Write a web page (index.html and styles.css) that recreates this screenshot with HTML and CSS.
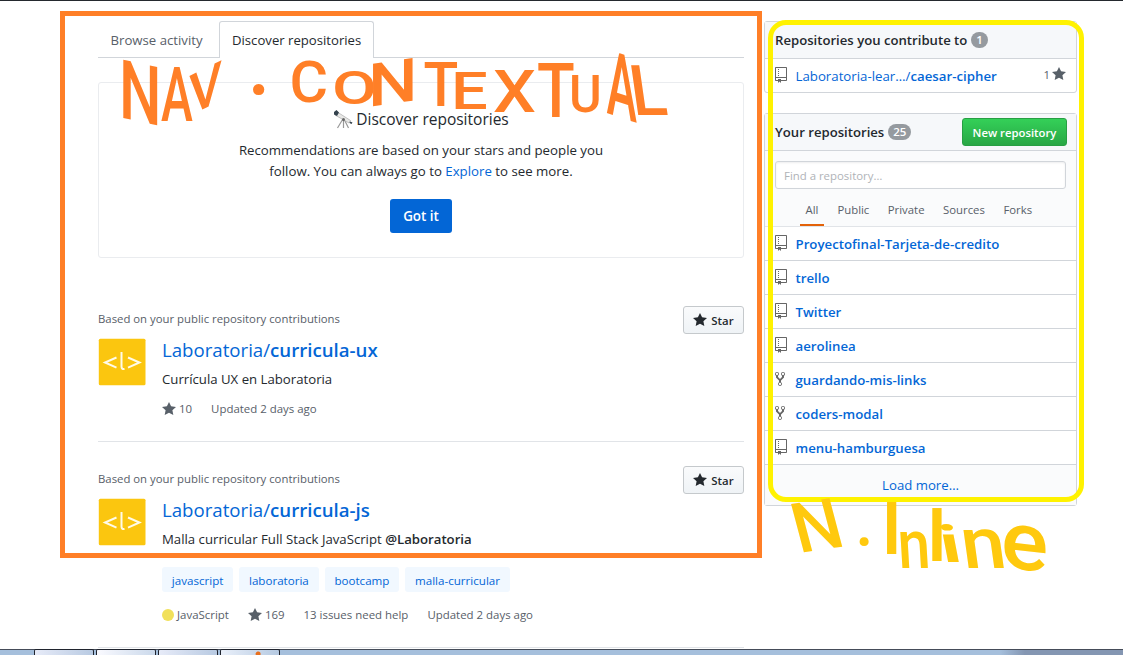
FILE: index.html
```html
<!DOCTYPE html>
<html lang="en">
<head>
<meta charset="utf-8">
<title>Discover repositories</title>
<link rel="stylesheet" href="styles.css">
</head>
<body>
<svg width="0" height="0" class="defs">
  <symbol id="star" viewBox="0 0 14 16"><path d="M14 6l-4.9-.64L7 1 4.9 5.36 0 6l3.6 3.26L2.67 14 7 11.67 11.33 14l-.93-4.74z"/></symbol>
  <symbol id="repo" viewBox="0 0 12 16"><path d="M4 9H3V8h1v1zm0-3H3v1h1V6zm0-2H3v1h1V4zm0-2H3v1h1V2zm8-1v12c0 .55-.45 1-1 1H6v2l-1.500-1.500L3 16v-2H1c-.55 0-1-.45-1-1V1c0-.55.45-1 1-1h10c.55 0 1 .45 1 1zm-1 10H1v2h2v-1h3v1h5v-2zm0-10H1v9h10V1z"/></symbol>
  <symbol id="fork" viewBox="0 0 10 16"><path fill-rule="evenodd" d="M8 1a1.993 1.993 0 0 0-1 3.720V6L5 8 3 6V4.720A1.993 1.993 0 0 0 2 1a1.993 1.993 0 0 0-1 3.720V6.500l3 3v1.780A1.993 1.993 0 0 0 5 15a1.993 1.993 0 0 0 1-3.720V9.500l3-3V4.720A1.993 1.993 0 0 0 8 1zM2 4.200C1.340 4.200.8 3.650.8 3c0-.65.55-1.200 1.200-1.200.65 0 1.200.55 1.200 1.200 0 .65-.55 1.200-1.200 1.200zm3 10c-.66 0-1.200-.55-1.200-1.200 0-.65.55-1.200 1.200-1.200.65 0 1.200.55 1.200 1.200 0 .65-.55 1.200-1.200 1.200zm3-10c-.66 0-1.200-.55-1.200-1.200 0-.65.55-1.200 1.200-1.200.65 0 1.200.55 1.200 1.200 0 .65-.55 1.200-1.200 1.200z"/></symbol>
  <symbol id="brand" viewBox="0 0 48 48"><rect x=".8" y=".8" width="46.700" height="46.500" rx="1.500" fill="#fbc60f"/><path d="M18.500 19.500L7 24.500l11.500 5.200M30 19.500l11.500 5L30 29.700M23.500 14v14.500q0 3 3 2.500" fill="none" stroke="#fffbe8" stroke-width="2"/></symbol>
</svg>
<div class="page">
  <main class="feed">
    <nav class="tabs"><a class="tab">Browse activity</a><a class="tab active">Discover repositories</a></nav>
    <section class="intro">
      <h2><svg class="scope" viewBox="0 0 20 20"><path d="M10.500 9L4.500 19M10.500 9v10M10.500 9l5 10" stroke="#999" stroke-width="1.200" fill="none"/><path d="M3.500 2.500l14 9-1.500 2.500L2 6z" fill="#e8e8e6" stroke="#aaa" stroke-width=".7"/><path d="M1 3l2.500-2 2.500 2.500-2 3.500-3-1.500zM17 12.500l2.500 1-1 1.500-2-1z" fill="#34424d"/><circle cx="10.500" cy="10.500" r="1.500" fill="#666"/></svg><span>Discover repositories</span></h2>
      <p>Recommendations are based on your stars and people you<br>follow. You can always go to <a>Explore</a> to see more.</p>
      <button class="primary"><span>Got it</span></button>
    </section>
    <article class="item">
      <div class="reason"><span>Based on your public repository contributions</span><button class="star"><svg><use href="#star"/></svg><span>Star</span></button></div>
      <div class="body">
        <svg class="avatar"><use href="#brand"/></svg>
        <div class="info">
          <h3>Laboratoria/<b>curricula-ux</b></h3>
          <p>Currícula UX en Laboratoria</p>
          <div class="meta"><span class="count"><svg><use href="#star"/></svg>10</span><span>Updated 2 days ago</span></div>
        </div>
      </div>
    </article>
    <article class="item second">
      <div class="reason"><span>Based on your public repository contributions</span><button class="star"><svg><use href="#star"/></svg><span>Star</span></button></div>
      <div class="body">
        <svg class="avatar"><use href="#brand"/></svg>
        <div class="info">
          <h3>Laboratoria/<b>curricula-js</b></h3>
          <p>Malla curricular Full Stack JavaScript <b>@Laboratoria</b></p>
          <div class="topics"><a>javascript</a><a>laboratoria</a><a>bootcamp</a><a>malla-curricular</a></div>
          <div class="meta"><span class="count"><i></i>JavaScript</span><span class="count"><svg><use href="#star"/></svg>169</span><span>13 issues need help</span><span>Updated 2 days ago</span></div>
        </div>
      </div>
    </article>
  </main>
  <aside class="side">
    <section class="box">
      <header><span>Repositories you contribute to</span><em>1</em></header>
      <div class="row"><svg class="repo"><use href="#repo"/></svg><a><span>Laboratoria-lear…/</span>caesar-cipher</a><small>1<svg><use href="#star"/></svg></small></div>
    </section>
    <section class="box">
      <header><span>Your repositories</span><em>25</em><button class="new">New repository</button></header>
      <div class="filter">
        <input placeholder="Find a repository…">
        <nav><a class="on">All</a><a>Public</a><a>Private</a><a>Sources</a><a>Forks</a></nav>
      </div>
      <div class="row"><svg class="repo"><use href="#repo"/></svg><a>Proyectofinal-Tarjeta-de-credito</a></div>
      <div class="row"><svg class="repo"><use href="#repo"/></svg><a>trello</a></div>
      <div class="row"><svg class="repo"><use href="#repo"/></svg><a>Twitter</a></div>
      <div class="row"><svg class="repo"><use href="#repo"/></svg><a>aerolinea</a></div>
      <div class="row"><svg class="forked"><use href="#fork"/></svg><a>guardando-mis-links</a></div>
      <div class="row"><svg class="forked"><use href="#fork"/></svg><a>coders-modal</a></div>
      <div class="row"><svg class="repo"><use href="#repo"/></svg><a>menu-hamburguesa</a></div>
      <div class="more">Load more…</div>
    </section>
  </aside>
</div>
<footer class="taskbar"><i></i><i class="r"></i><i class="t"></i><i class="o"></i></footer>

<div class="frame main-frame"></div>
<div class="frame side-frame"></div>
<svg class="notes" viewBox="0 0 1123 655">
  <g class="orange">
    <text transform="matrix(.6 .13 0 .82 119 117)">N</text>
    <text transform="matrix(.48 0 0 .76 161 121)">A</text>
    <text transform="matrix(.51 -.25 0 .56 189 116)">V</text>
    <text class="dot" transform="matrix(1 0 0 1 246 94)">.</text>
    <text transform="matrix(.59 0 0 .58 289.500 102)">C</text>
    <text transform="matrix(.65 0 0 .46 332 104)">O</text>
    <text transform="matrix(.7 -.1 0 .6 368 107)">N</text>
    <text transform="matrix(.57 0 0 .61 423.500 106)">T</text>
    <text transform="matrix(.65 0 0 .52 451 109)">E</text>
    <text transform="matrix(.68 0 0 .6 493 112)">X</text>
    <text transform="matrix(.62 0 0 .76 537 117)">T</text>
    <text transform="matrix(.5 0 0 .52 569 112)">U</text>
    <text transform="matrix(.46 .15 0 .9 606.500 113)">A</text>
    <text transform="matrix(.66 0 .1 .7 633.500 115)">L</text>
  </g>
  <g class="gold">
    <text transform="matrix(.68 -.1 .18 .68 799 553)">N</text>
    <text class="dot" transform="matrix(.8 0 0 .8 854 546)">.</text>
    <text transform="matrix(.75 0 0 .72 881 554)">I</text>
    <text transform="matrix(.58 0 .04 .68 899 568)">n</text>
    <text transform="matrix(.78 0 0 .7 927 561)">l</text>
    <text transform="matrix(.9 0 .1 .52 942 562)">i</text>
    <text transform="matrix(.8 0 .1 .72 964 568)">n</text>
    <text transform="matrix(.88 .1 0 .82 1001 567)">e</text>
  </g>
</svg>
</body>
</html>
```
FILE: styles.css
```css
* { box-sizing: border-box; }
body { margin: 0; height: 655px; overflow: hidden; position: relative; background: #fff; border-top: 1px solid #24292e; color: #24292e; font: 13.2px/21px "Open Sans", "Noto Sans", sans-serif; }
h2, h3, p { margin: 0; }
button, input { font-family: inherit; padding: 0; margin: 0; }
b { font-weight: 600; }
svg { fill: currentColor; flex: none; }
.defs { position: absolute; }
.page { display: flex; gap: 20px; align-items: flex-start; padding: 20px 0 0 98px; height: 648px; }
.feed { width: 646px; }
.tabs { height: 37px; display: flex; border-bottom: 1px solid #d1d5da; }
.tab { width: 121px; height: 37px; padding-left: 12.5px; line-height: 38px; color: #586069; white-space: nowrap; }
.tab.active { width: 155px; padding-left: 12px; line-height: 36px; background: #fff; color: #24292e; font-size: 13.15px; border: 1px solid #d1d5da; border-bottom: 0; border-radius: 3px 3px 0 0; }
.intro { margin-top: 24px; height: 176px; border: 1px solid #eaecef; border-radius: 3px; text-align: center; padding-top: 24px; }
.intro h2 { height: 24px; display: flex; justify-content: center; align-items: center; gap: 3px; font-size: 15.5px; font-weight: 500; line-height: 26px; }
.scope { width: 20px; height: 20px; }
.intro p { margin-top: 9px; font-size: 13.25px; }
a { color: #0366d6; }
.primary { margin-top: 17px; width: 62px; height: 34px; border: 0; border-radius: 3px; background: #0366d6; color: #fff; font-size: 13.4px; font-weight: 600; }
.item { margin-top: 48px; height: 136px; border-bottom: 1px solid #e1e4e8; }
.item.second { margin-top: 24px; height: 182px; }
.reason { display: flex; justify-content: space-between; height: 32px; font-size: 11.35px; line-height: 26px; color: #586069; }
.star { width: 61px; height: 28px; display: flex; align-items: center; justify-content: center; gap: 4px; border: 1px solid #c5c9cc; border-radius: 3px; background: linear-gradient(#fafbfc, #eff3f6); color: #24292e; font-size: 11.4px; font-weight: 600; }
.star svg { width: 14px; height: 16px; }
.body { display: flex; gap: 16px; }
.avatar { width: 48px; height: 48px; }
.info h3 { height: 24px; font-size: 18.65px; line-height: 24px; font-weight: 400; color: #0366d6; }
.info p { margin-top: 7px; }
.meta { display: flex; gap: 19px; margin-top: 9px; font-size: 11.45px; line-height: 20px; color: #586069; }
.count { display: flex; align-items: center; gap: 3px; }
.count svg { width: 14px; height: 16px; }
.count i { width: 12px; height: 12px; border-radius: 50%; background: #f1e05a; }
.topics { display: flex; gap: 6px; margin: 17px 0 13px; height: 25px; }
.topics a { padding: 0 9.800px; border-radius: 3px; background: #f1f8ff; font-size: 11.6px; line-height: 27px; }
.topics + .meta { margin: 0; }
.side { width: 313px; }
.box { margin-bottom: 20px; border: 1px solid #d1d5da; border-radius: 3px; background: #fff; }
.box header { height: 37px; padding: 0 9px 0 10px; display: flex; align-items: center; background: #f6f8fa; border-bottom: 1px solid #d1d5da; font-weight: 600; font-size: 13.15px; }
.box em { margin-left: 4px; min-width: 16px; padding: 0 5px; border-radius: 9px; height: 16px; background: #959a9f; color: #fff; font: 600 11.5px/16px "Open Sans", sans-serif; }
.new { margin-left: auto; width: 105px; height: 28px; border: 1px solid #279f43; border-radius: 3px; background: linear-gradient(#34d058, #28a745); color: #fff; font-size: 11.3px; font-weight: 600; }
.row { height: 34px; display: flex; align-items: center; padding: 1px 10px 0; border-bottom: 1px solid #d1d5da; font-weight: 600; font-size: 13.25px; }
.box:first-child .row { height: 33px; border: 0; }
.row a span { font-weight: 400; }
.repo { width: 12px; height: 16px; margin: -3px 8.500px 0 0; color: #666; }
.forked { width: 10px; height: 16px; margin: -3px 10.500px 0 0; color: #666; }
.row small { margin: -4px 0 0 auto; display: flex; align-items: center; gap: 2px; font-size: 11.4px; font-weight: 400; color: #586069; }
.row small svg { width: 14px; height: 16px; }
.filter { height: 76px; padding: 10px 10px 0; background: #fafbfc; border-bottom: 1px solid #e1e4e8; }
.filter input { display: block; width: 291px; height: 28px; padding: 0 8px; border: 1px solid #d1d5da; border-radius: 3px; box-shadow: inset 0 1px 2px rgba(27,31,35,.08); font-size: 11.4px; }
.filter input::placeholder { color: #b0b3b7; }
.filter nav { display: flex; margin-left: 25px; gap: 8.5px; }
.filter nav a { height: 37px; padding: 0 5px; color: #586069; font-size: 11.35px; line-height: 42px; }
.filter nav .on { padding: 0 5.500px; border-bottom: 2px solid #e36209; }
.more { height: 40px; text-align: center; background: #fafbfc; line-height: 40px; color: #0366d6; }
.taskbar { height: 6px; padding-left: 34px; display: flex; gap: 2px; border-top: 1px solid #454c59; background: linear-gradient(90deg, #a5bfdc 0 1000px, #8496b2 1025px); }
.taskbar i { width: 60px; border: 1px solid #20242e; border-width: 1px 1px 0; margin-top: -1px; border-radius: 2px 2px 0 0; background: linear-gradient(90deg, #e7ebf8, #b8cae2); }
.taskbar .r { background: radial-gradient(ellipse at 50% 160%, #df6675 0 5px, transparent 6px), linear-gradient(90deg, #fafaff, #cbd9eb); }
.taskbar .t { background: radial-gradient(ellipse at 66% 160%, #c08e70 0 5px, transparent 6px), linear-gradient(90deg, #e7ebf8, #b8cae2); }
.taskbar .o { background: radial-gradient(circle at 64% 80%, #e8701e 0 2px, transparent 3px), linear-gradient(90deg, #eaf0fa, #b5c9e1); }
/* Annotation layer over the page */
.frame { position: absolute; border: 5px solid #ff7f27; }
.main-frame { left: 60px; top: 10px; width: 702px; height: 547px; }
.side-frame { left: 768px; top: 19px; width: 316px; height: 482px; border-color: #fff200; border-radius: 18px; }
.notes { position: absolute; left: 0; top: -1px; width: 1123px; height: 655px; pointer-events: none; font-family: Roboto, sans-serif; font-size: 100px; font-weight: 500; }
.dot { font-weight: 400; }
.orange { fill: #ff7f27; }
.gold { fill: #ffc90e; }
```
